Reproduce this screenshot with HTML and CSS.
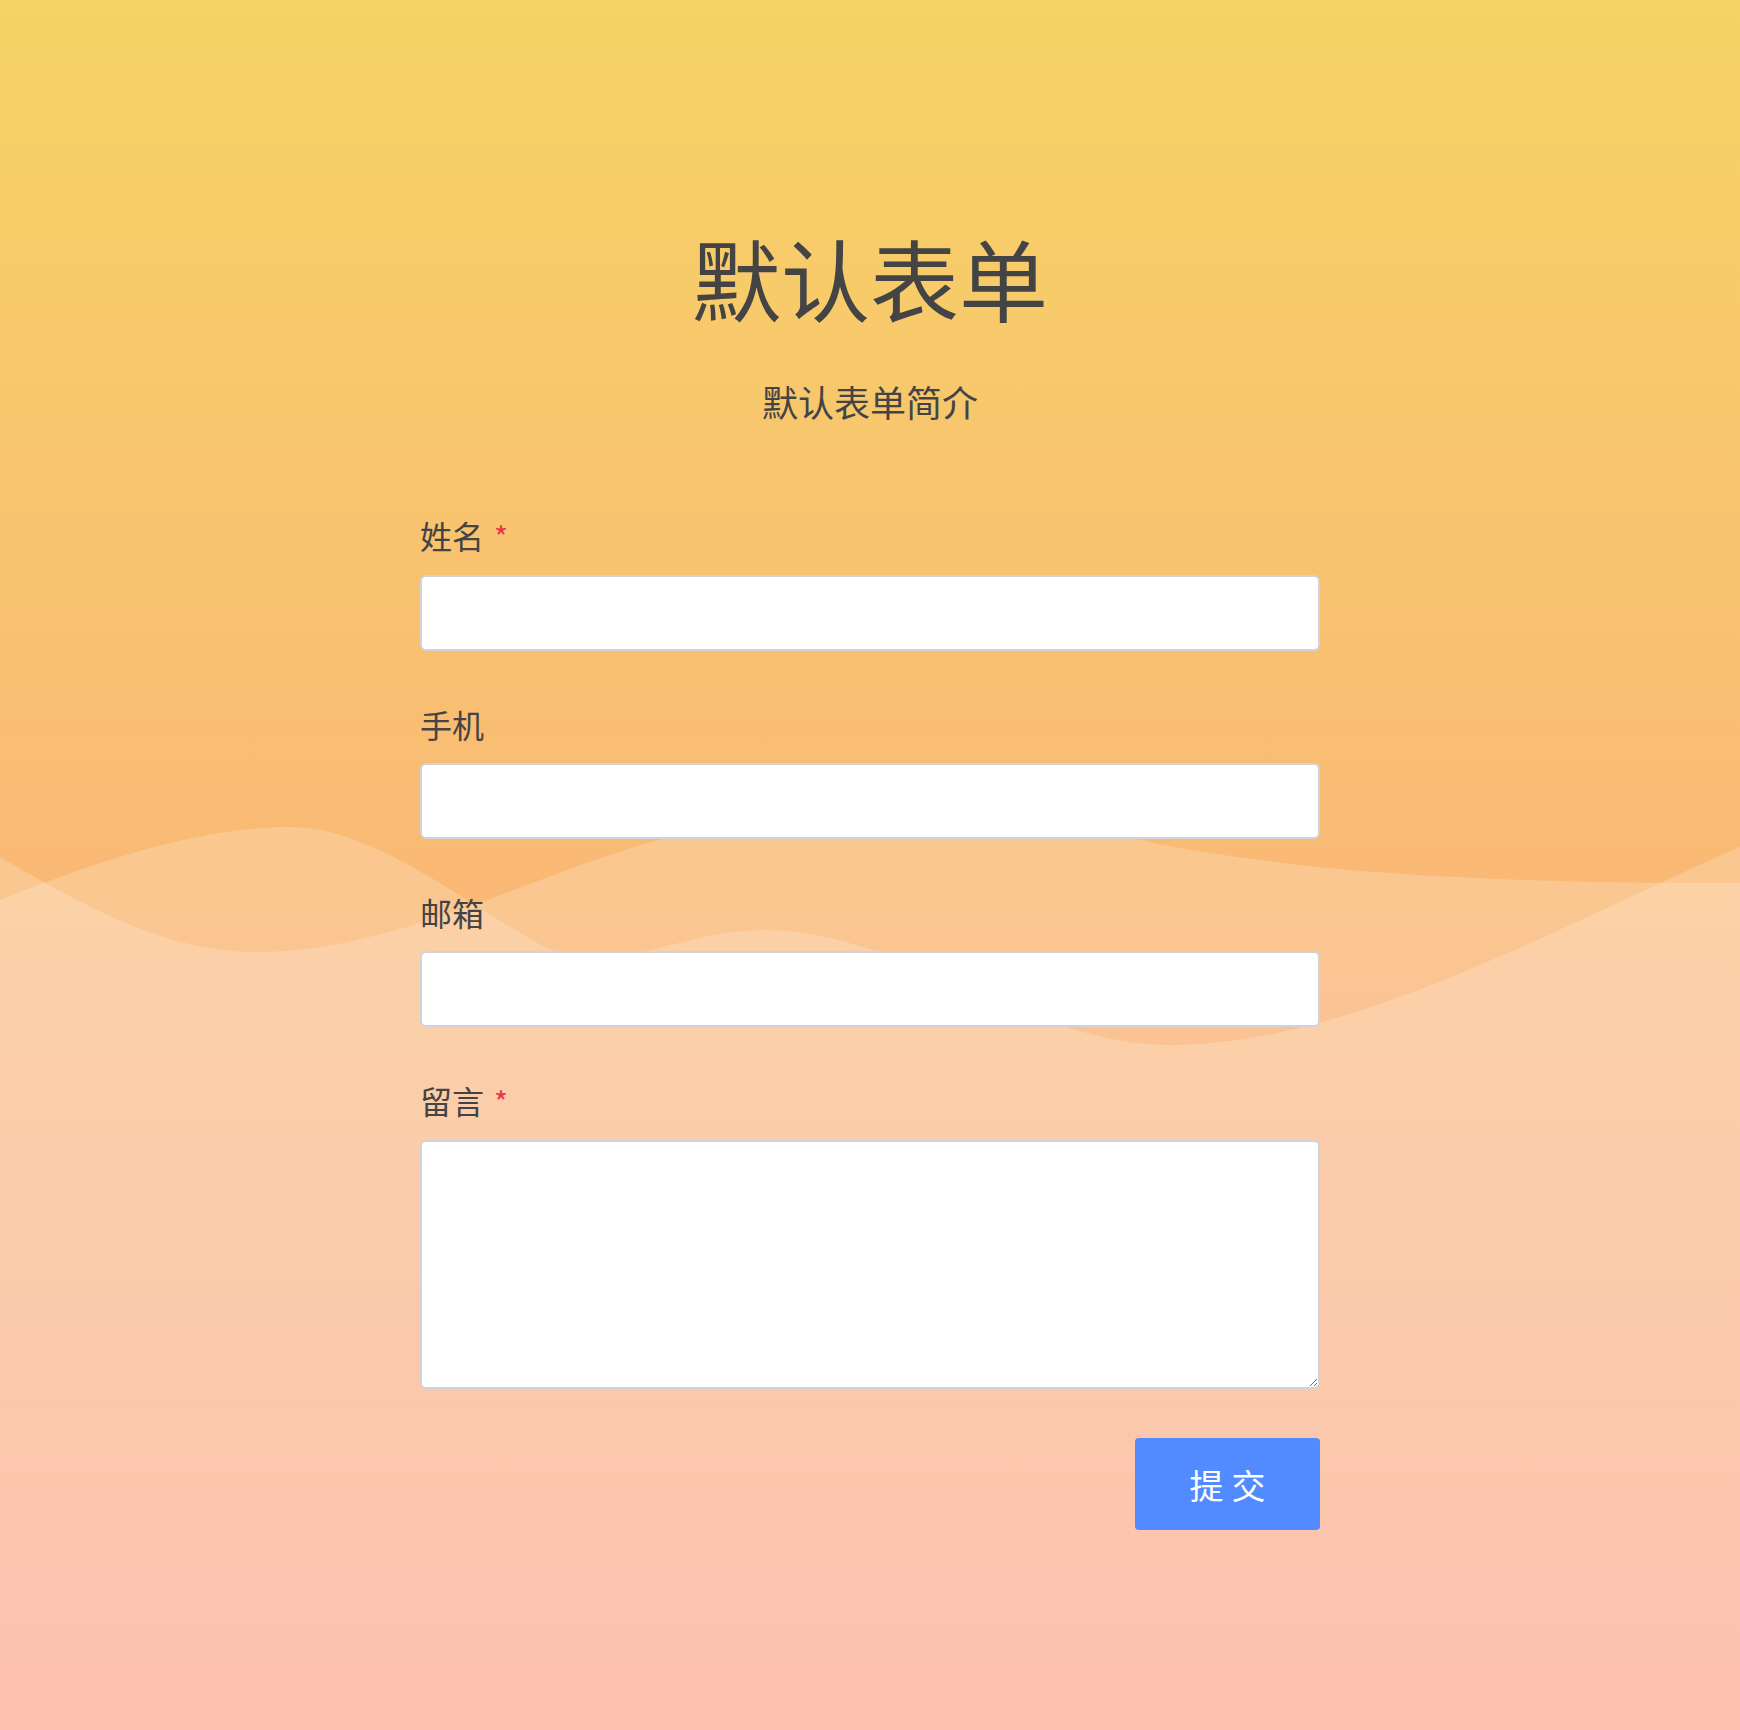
FILE: index.html
```html
<!DOCTYPE html>
<html lang="zh-CN">
<head>
<meta charset="utf-8">
<title>默认表单</title>
<link rel="stylesheet" href="styles.css">
</head>
<body>
<svg class="waves" viewBox="0 0 1740 1030" preserveAspectRatio="none" aria-hidden="true">
  <path class="wave" d="M0,157 C90,210 170,252 255,252 C400,252 540,170 666,138 C760,115 840,100 900,100 C1000,100 1070,120 1130,138 C1300,175 1500,183 1740,183 L1740,1030 L0,1030 Z"/>
  <path class="wave" d="M0,200 C100,160 200,127 289,127 C380,127 470,210 555,252 C600,280 680,230 766,230 C900,230 1030,345 1170,345 C1350,345 1550,230 1740,147 L1740,1030 L0,1030 Z"/>
</svg>
<main class="page">
  <header class="head">
    <h1 class="title">默认表单</h1>
    <p class="intro">默认表单简介</p>
  </header>
  <form class="form">
    <div class="field">
      <label class="label">姓名<span class="req">*</span></label>
      <input class="input" type="text">
    </div>
    <div class="field">
      <label class="label">手机</label>
      <input class="input" type="text">
    </div>
    <div class="field">
      <label class="label">邮箱</label>
      <input class="input" type="text">
    </div>
    <div class="field">
      <label class="label">留言<span class="req">*</span></label>
      <textarea class="input textarea"></textarea>
    </div>
    <div class="actions">
      <button class="submit" type="button">提交</button>
    </div>
  </form>
</main>
</body>
</html>
```
FILE: styles.css
```css
html, body {
  margin: 0;
  padding: 0;
}
body {
  position: relative;
  min-height: 1730px;
  background: linear-gradient(to bottom, #f6d365 0%, #fda085 100%);
  font-family: "Noto Sans CJK SC", "Noto Sans", sans-serif;
  color: #444;
  overflow: hidden;
}
.waves {
  position: absolute;
  left: 0;
  top: 700px;
  width: 100%;
  height: 1030px;
  z-index: 0;
}
.wave {
  fill: #ffffff;
  fill-opacity: 0.2;
}
.page {
  position: relative;
  z-index: 1;
  width: 900px;
  margin: 0 auto;
  padding-top: 209px;
}
.head {
  text-align: center;
}
.title {
  margin: 0;
  font-size: 89px;
  line-height: 135px;
  font-weight: 400;
  color: #444;
}
.intro {
  margin: 30px 0 0;
  font-size: 36px;
  line-height: 54px;
  color: #444;
}
.form {
  margin-top: 83px;
}
.field {
  display: flex;
  flex-direction: column;
  margin-bottom: 49px;
}
.label {
  font-size: 32px;
  line-height: 48px;
  color: #444;
  margin-bottom: 15px;
}
.req {
  color: #e8374b;
  margin-left: 10px;
  font-size: 30px;
}
.input {
  box-sizing: border-box;
  width: 900px;
  height: 76px;
  border: 2px solid #d0d4da;
  border-radius: 6px;
  background: #fff;
  font: inherit;
  font-size: 28px;
  padding: 0 16px;
  outline: none;
}
.textarea {
  height: 249px;
  padding: 12px 16px;
}
.actions {
  display: flex;
  justify-content: flex-end;
}
.submit {
  width: 185px;
  height: 92px;
  border: none;
  border-radius: 4px;
  background: #528bff;
  color: #fff;
  font-family: inherit;
  font-size: 34px;
  letter-spacing: 8px;
  text-indent: 8px;
  cursor: pointer;
}
```
